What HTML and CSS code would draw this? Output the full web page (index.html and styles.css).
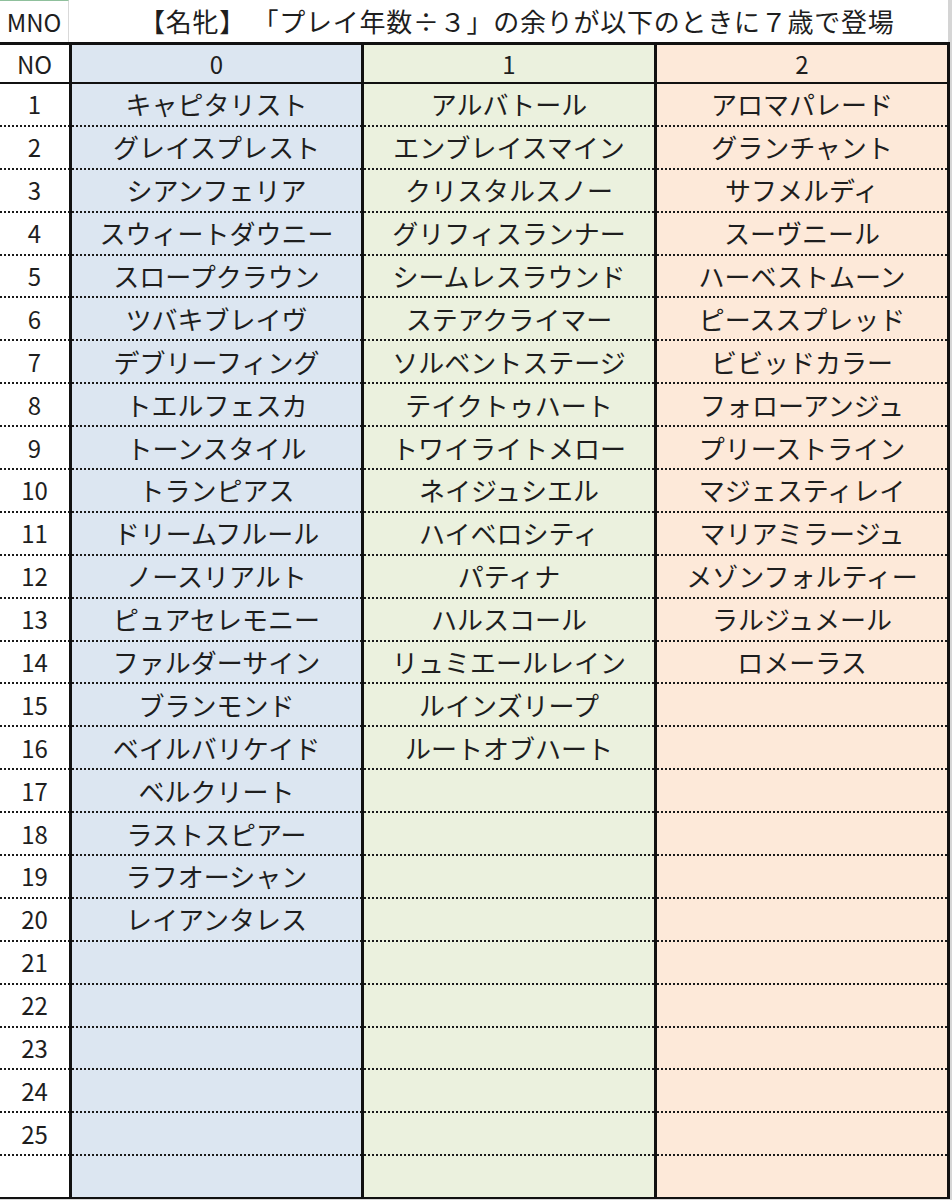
FILE: index.html
```html
<!DOCTYPE html>
<html lang="ja">
<head>
<meta charset="utf-8">
<title>名牝</title>
<link rel="stylesheet" href="styles.css">
</head>
<body>
<div class="page">
  <div class="title-row">
    <div class="mno">MNO</div>
    <div class="title">【名牝】 「プレイ年数÷３」の余りが以下のときに７歳で登場</div>
  </div>
  <div class="grid">
    <div class="c n hd">NO</div><div class="c b hd">0</div><div class="c g hd">1</div><div class="c p hd">2</div>

    <div class="c n dt">1</div><div class="c b dt">キャピタリスト</div><div class="c g dt">アルバトール</div><div class="c p dt">アロマパレード</div>
    <div class="c n dt">2</div><div class="c b dt">グレイスプレスト</div><div class="c g dt">エンブレイスマイン</div><div class="c p dt">グランチャント</div>
    <div class="c n dt">3</div><div class="c b dt">シアンフェリア</div><div class="c g dt">クリスタルスノー</div><div class="c p dt">サフメルディ</div>
    <div class="c n dt">4</div><div class="c b dt">スウィートダウニー</div><div class="c g dt">グリフィスランナー</div><div class="c p dt">スーヴニール</div>
    <div class="c n dt">5</div><div class="c b dt">スロープクラウン</div><div class="c g dt">シームレスラウンド</div><div class="c p dt">ハーベストムーン</div>
    <div class="c n dt">6</div><div class="c b dt">ツバキブレイヴ</div><div class="c g dt">ステアクライマー</div><div class="c p dt">ピーススプレッド</div>
    <div class="c n dt">7</div><div class="c b dt">デブリーフィング</div><div class="c g dt">ソルベントステージ</div><div class="c p dt">ビビッドカラー</div>
    <div class="c n dt">8</div><div class="c b dt">トエルフェスカ</div><div class="c g dt">テイクトゥハート</div><div class="c p dt">フォローアンジュ</div>
    <div class="c n dt">9</div><div class="c b dt">トーンスタイル</div><div class="c g dt">トワイライトメロー</div><div class="c p dt">プリーストライン</div>
    <div class="c n dt">10</div><div class="c b dt">トランピアス</div><div class="c g dt">ネイジュシエル</div><div class="c p dt">マジェスティレイ</div>
    <div class="c n dt">11</div><div class="c b dt">ドリームフルール</div><div class="c g dt">ハイベロシティ</div><div class="c p dt">マリアミラージュ</div>
    <div class="c n dt">12</div><div class="c b dt">ノースリアルト</div><div class="c g dt">パティナ</div><div class="c p dt">メゾンフォルティー</div>
    <div class="c n dt">13</div><div class="c b dt">ピュアセレモニー</div><div class="c g dt">ハルスコール</div><div class="c p dt">ラルジュメール</div>
    <div class="c n dt">14</div><div class="c b dt">ファルダーサイン</div><div class="c g dt">リュミエールレイン</div><div class="c p dt">ロメーラス</div>
    <div class="c n dt">15</div><div class="c b dt">ブランモンド</div><div class="c g dt">ルインズリープ</div><div class="c p dt"></div>
    <div class="c n dt">16</div><div class="c b dt">ベイルバリケイド</div><div class="c g dt">ルートオブハート</div><div class="c p dt"></div>
    <div class="c n dt">17</div><div class="c b dt">ベルクリート</div><div class="c g dt"></div><div class="c p dt"></div>
    <div class="c n dt">18</div><div class="c b dt">ラストスピアー</div><div class="c g dt"></div><div class="c p dt"></div>
    <div class="c n dt">19</div><div class="c b dt">ラフオーシャン</div><div class="c g dt"></div><div class="c p dt"></div>
    <div class="c n dt">20</div><div class="c b dt">レイアンタレス</div><div class="c g dt"></div><div class="c p dt"></div>
    <div class="c n dt">21</div><div class="c b dt"></div><div class="c g dt"></div><div class="c p dt"></div>
    <div class="c n dt">22</div><div class="c b dt"></div><div class="c g dt"></div><div class="c p dt"></div>
    <div class="c n dt">23</div><div class="c b dt"></div><div class="c g dt"></div><div class="c p dt"></div>
    <div class="c n dt">24</div><div class="c b dt"></div><div class="c g dt"></div><div class="c p dt"></div>
    <div class="c n dt">25</div><div class="c b dt"></div><div class="c g dt"></div><div class="c p dt"></div>

    <div class="c n fl"></div><div class="c b fl"></div><div class="c g fl"></div><div class="c p fl"></div>
  </div>
</div>
</body>
</html>
```
FILE: styles.css
```css
html, body {
  margin: 0;
  padding: 0;
}
body {
  background: #d6d6d6;
  width: 952px;
  height: 1200px;
  overflow: hidden;
  font-family: "Noto Sans CJK JP", "Noto Sans", sans-serif;
  color: #1e1e1e;
  text-spacing-trim: space-all;
}
.page {
  width: 950px;
  background: #ffffff;
}
.title-row {
  display: grid;
  grid-template-columns: 69px 1fr;
  height: 42px;
  background: #ffffff;
  border-right: 2px solid #d4d4d4;
  box-sizing: border-box;
}
.mno {
  font-size: 24px;
  line-height: 1;
  display: flex;
  align-items: center;
  justify-content: center;
  border-right: 1px solid #d9d9d9;
  border-top: 1px solid #8fc09c;
  box-sizing: border-box;
}
.title {
  font-size: 26px;
  letter-spacing: 0.75px;
  line-height: 1;
  display: flex;
  align-items: center;
  padding-left: 70px;
  white-space: pre;
}
.grid {
  display: grid;
  grid-template-columns: 69px 289px 290px 290px;
  column-gap: 3px;
  background: #111111;
  border-top: 3px solid #111111;
  border-right: 3px solid #111111;
  border-bottom: 2px solid #111111;
  width: 950px;
  box-sizing: border-box;
}
.c {
  display: flex;
  align-items: center;
  justify-content: center;
  font-size: 26px;
  line-height: 1;
  box-sizing: border-box;
  white-space: nowrap;
}
.n { background-color: #ffffff; font-size: 24px; }
.b { background-color: #dce6f1; }
.g { background-color: #ebf1de; }
.p { background-color: #fde9d9; }
.hd {
  height: 39px;
  border-bottom: 2px solid #111111;
  padding-top: 1px;
  font-size: 24px;
}
.dt {
  height: 42.9px;
  padding-bottom: 2px;
  background-image: repeating-linear-gradient(90deg, #1a1a1a 0 2px, transparent 2px 4px);
  background-size: 100% 2px;
  background-position: left bottom;
  background-repeat: no-repeat;
}
.fl {
  height: 40.5px;
}
```
